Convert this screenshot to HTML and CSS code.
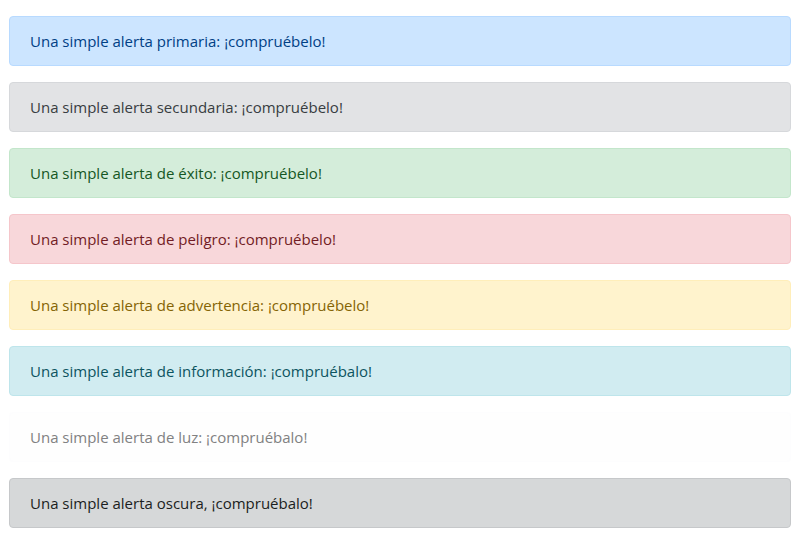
FILE: index.html
```html
<!DOCTYPE html>
<html lang="es">
<head>
<meta charset="utf-8">
<title>Alertas</title>
<link rel="stylesheet" href="styles.css">
</head>
<body>
<main class="page">
  <div class="alert alert-primary">Una simple alerta primaria: ¡compruébelo!</div>
  <div class="alert alert-secondary">Una simple alerta secundaria: ¡compruébelo!</div>
  <div class="alert alert-success">Una simple alerta de éxito: ¡compruébelo!</div>
  <div class="alert alert-danger">Una simple alerta de peligro: ¡compruébelo!</div>
  <div class="alert alert-warning">Una simple alerta de advertencia: ¡compruébelo!</div>
  <div class="alert alert-info">Una simple alerta de información: ¡compruébalo!</div>
  <div class="alert alert-light">Una simple alerta de luz: ¡compruébalo!</div>
  <div class="alert alert-dark">Una simple alerta oscura, ¡compruébalo!</div>
</main>
</body>
</html>
```

FILE: styles.css
```css
html, body {
  margin: 0;
  background: #fff;
}
body {
  font-family: "Open Sans", "Noto Sans", sans-serif;
  font-size: 15px;
  line-height: 24px;
  color: #212529;
}
.page {
  display: flex;
  flex-direction: column;
  gap: 16px;
  padding: 16px 16px 0 9px;
}
.alert {
  padding: 12px 20px;
  border: 1px solid transparent;
  border-radius: 4px;
}
.alert-primary { color: #004085; background: #cce5ff; border-color: #b8daff; }
.alert-secondary { color: #383d41; background: #e2e3e5; border-color: #d6d8db; }
.alert-success { color: #155724; background: #d4edda; border-color: #c3e6cb; }
.alert-danger { color: #721c24; background: #f8d7da; border-color: #f5c6cb; }
.alert-warning { color: #856404; background: #fff3cd; border-color: #ffeeba; }
.alert-info { color: #0c5460; background: #d1ecf1; border-color: #bee5eb; }
.alert-light { color: #818182; background: #fefefe; border-color: #fdfdfe; }
.alert-dark { color: #1b1e21; background: #d6d8d9; border-color: #c6c8ca; }
```
